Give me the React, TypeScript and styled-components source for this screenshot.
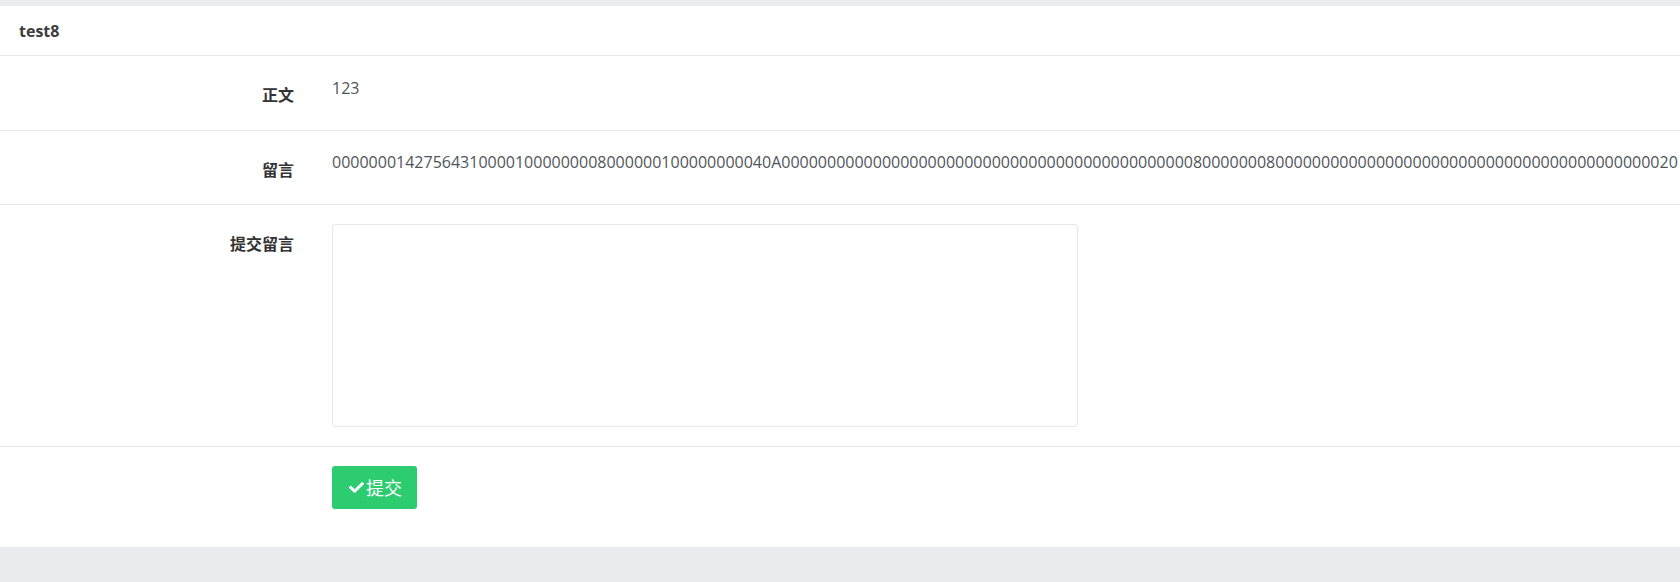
import { FC } from 'react';
import styled, { createGlobalStyle } from 'styled-components';
import { FaCheck } from 'react-icons/fa';

const GlobalStyle = createGlobalStyle`
  html, body {
    margin: 0;
    padding: 0;
    background: #e9edf0;
  }
  body {
    font-family: "Open Sans", "Noto Sans CJK SC", sans-serif;
    font-size: 16px;
    line-height: 1.5;
    color: #333;
  }
`;

const Page = styled.div`
  padding: 6px 0 34px;
`;

const Panel = styled.section`
  background: #fff;
`;

const PanelHeader = styled.header`
  padding: 14px 19px 13px;
  border-bottom: 1px solid #e6e9ee;
  font-size: 16px;
  line-height: 22px;
  font-weight: 700;
  color: #3d3d3d;
`;

const FormRow = styled.div<{ $last?: boolean; $minHeight?: number }>`
  display: grid;
  grid-template-columns: 294px 1fr;
  column-gap: 38px;
  padding: ${(p) => (p.$last ? '19px 0 38px' : '19px 0 19px')};
  border-bottom: ${(p) => (p.$last ? 'none' : '1px solid #e6e9ee')};
  min-height: ${(p) => (p.$minHeight ? `${p.$minHeight}px` : 'auto')};
`;

const Label = styled.label`
  text-align: right;
  padding-top: 8px;
  font-weight: 700;
  color: #333;
  white-space: nowrap;
`;

const Value = styled.div<{ $shift?: number }>`
  padding-top: ${(p) => p.$shift ?? 0}px;
  color: #50555b;
  white-space: nowrap;
  overflow: hidden;
`;

const TextArea = styled.textarea`
  display: block;
  box-sizing: border-box;
  width: 746px;
  height: 203px;
  margin: 0;
  padding: 6px 12px;
  border: 1px solid #e4e7ed;
  border-radius: 3px;
  resize: none;
  font: inherit;
  outline: none;
`;

const SubmitButton = styled.button`
  display: inline-flex;
  align-items: center;
  gap: 2px;
  box-sizing: border-box;
  height: 43px;
  padding: 0 15px 0 17px;
  border: none;
  border-radius: 3px;
  background: #2ecc71;
  color: #fff;
  font-family: "Open Sans", "Noto Sans CJK SC", sans-serif;
  font-size: 18px;
  line-height: 1;
  cursor: pointer;

  svg {
    width: 15px;
    height: 15px;
  }
`;

const Spacer = styled.div``;

const message =
  '000000014275643100001000000008000000100000000040A' +
  '0'.repeat(45) +
  '8' +
  '0'.repeat(7) +
  '8' +
  '0'.repeat(42) +
  '20';

const App: FC = () => {
  return (
    <Page>
      <GlobalStyle />
      <Panel>
        <PanelHeader>test8</PanelHeader>
        <FormRow $minHeight={36}>
          <Label>正文</Label>
          <Value $shift={1}>123</Value>
        </FormRow>
        <FormRow $minHeight={35}>
          <Label>留言</Label>
          <Value>{message}</Value>
        </FormRow>
        <FormRow>
          <Label>提交留言</Label>
          <div>
            <TextArea />
          </div>
        </FormRow>
        <FormRow $last>
          <Spacer />
          <div>
            <SubmitButton type="button">
              <FaCheck />
              提交
            </SubmitButton>
          </div>
        </FormRow>
      </Panel>
    </Page>
  );
};

export default App;
